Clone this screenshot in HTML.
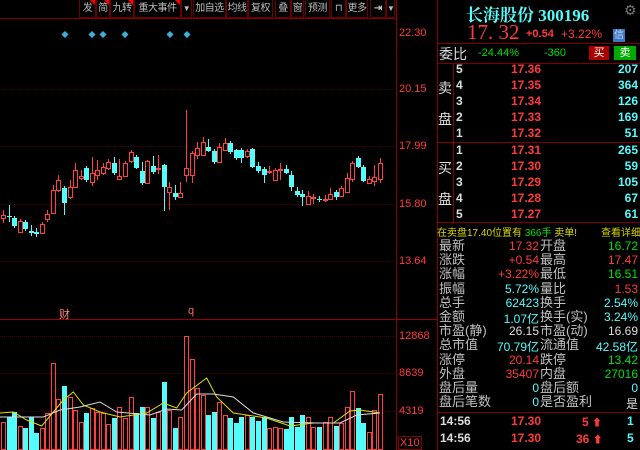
<!DOCTYPE html>
<html><head><meta charset="utf-8">
<style>
*{margin:0;padding:0;box-sizing:border-box}
body{width:640px;height:450px;background:#000;overflow:hidden;position:relative;font-family:"Liberation Sans","Noto Sans CJK SC",sans-serif}
.a{position:absolute;white-space:nowrap}
.tb{position:absolute;top:0;height:18px;border:1px solid #6a0000;border-top:none;color:#bbb;font-size:10px;line-height:17px;text-align:center;white-space:nowrap;overflow:hidden;letter-spacing:-0.5px}
.tri{position:absolute;right:0;top:0;width:0;height:0;border-top:5px solid #f00;border-left:5px solid transparent}
.r{color:#ff3b3b}.c{color:#54fcfc}.g{color:#00e000}.w{color:#ddd}.y{color:#d8d800}.gr{color:#c0c0c0}
.hl{position:absolute;height:1px;background:#800000}
.vl{position:absolute;width:1px;background:#800000}
.ob{font-size:12px;font-weight:bold}
.st{font-size:13px}
</style></head><body>
<svg id="ch" width="640" height="450" style="position:absolute;left:0;top:0"></svg>

<div class="tb" style="left:79px;width:17px">发<i class="tri"></i></div>
<div class="tb" style="left:96px;width:14px">简<i class="tri"></i></div>
<div class="tb" style="left:110px;width:24px">九转<i class="tri"></i></div>
<div class="tb" style="left:134px;width:47px">重大事件<i class="tri"></i></div>
<div class="tb" style="left:181px;width:11px;font-size:8px">▼</div>
<div class="tb" style="left:193px;width:33px">加自选</div>
<div class="tb" style="left:226px;width:22px">均线</div>
<div class="tb" style="left:248px;width:25px">复权</div>
<div class="tb" style="left:275px;width:16px">叠</div>
<div class="tb" style="left:291px;width:13px">窗</div>
<div class="tb" style="left:305px;width:25px">预测</div>
<div class="tb" style="left:331px;width:15px">⊓</div>
<div class="tb" style="left:346px;width:22px">更多</div>
<div class="tb" style="left:370px;width:16px;font-weight:bold">⇥</div>
<div class="tb" style="left:386px;width:9px;font-size:8px">▼</div>

<div class="a r" style="left:399px;top:27px;font-size:11px">22.30</div>
<div class="a r" style="left:399px;top:83px;font-size:11px">20.15</div>
<div class="a r" style="left:399px;top:140px;font-size:11px">17.99</div>
<div class="a r" style="left:399px;top:198px;font-size:11px">15.80</div>
<div class="a r" style="left:399px;top:255px;font-size:11px">13.64</div>
<div class="a r" style="left:399px;top:330px;font-size:11px">12868</div>
<div class="a r" style="left:399px;top:367px;font-size:11px">8639</div>
<div class="a r" style="left:399px;top:405px;font-size:11px">4319</div>
<div class="a r" style="left:398px;top:436px;font-size:11px;border:1px solid #800;padding:0 1px;line-height:12px">X10</div>
<div class="a" style="left:59px;top:306px;font-size:11px;color:#f88">财</div>
<div class="a" style="left:188px;top:305px;font-size:11px;color:#f66">q</div>

<div class="a c" style="left:466px;top:1px;font-size:17px;font-weight:bold;font-family:'Liberation Serif','Noto Serif CJK SC',serif">长海股份 300196</div>
<div class="a" style="left:624px;top:2px;font-size:14px;color:#777">⚙</div>
<div class="a r" style="left:467px;top:20px;font-size:21px;font-family:'Liberation Serif',serif">17. 32</div>
<div class="a r" style="left:526px;top:28px;font-size:11px;font-weight:bold">+0.54</div>
<div class="a r" style="left:561px;top:27px;font-size:12px">+3.22%</div>
<div class="a" style="left:613px;top:29px;width:12px;height:13px;background:#3a78c8;color:#cde;font-size:10px;line-height:13px;text-align:center">信</div>
<div class="hl" style="left:437px;top:43px;width:203px"></div>
<div class="a w" style="left:439px;top:44px;font-size:14px">委比</div>
<div class="a g" style="left:478px;top:47px;font-size:11px">-24.44%</div>
<div class="a g" style="left:544px;top:47px;font-size:11px">-360</div>
<div class="a" style="left:589px;top:46px;width:20px;height:14px;background:#a00;color:#fff;font-size:11px;line-height:14px;text-align:center">买</div>
<div class="a" style="left:614px;top:46px;width:22px;height:14px;background:#0a0;color:#fff;font-size:11px;line-height:14px;text-align:center">卖</div>
<div class="hl" style="left:437px;top:63px;width:203px"></div>
<div class="hl" style="left:437px;top:142px;width:203px"></div>
<div class="hl" style="left:437px;top:222px;width:203px"></div>
<div class="vl" style="left:453px;top:63px;height:159px"></div>
<div class="a w" style="left:438px;top:78px;font-size:14px">卖</div>
<div class="a w" style="left:438px;top:109px;font-size:14px">盘</div>
<div class="a w" style="left:438px;top:158px;font-size:14px">买</div>
<div class="a w" style="left:438px;top:189px;font-size:14px">盘</div>
<div id="ob"></div>
<div class="a y" style="left:437px;top:224px;font-size:10px">在卖盘17.40位置有 <span class="g">366手</span> 卖单!</div>
<div class="a y" style="left:601px;top:224px;font-size:10px">查看详细</div>
<div id="stats"></div>
<div class="hl" style="left:437px;top:412px;width:203px"></div>
<div class="a w ob" style="left:440px;top:414px">14:56</div>
<div class="a r ob" style="left:511px;top:414px">17.30</div>
<div class="a r ob" style="left:582px;top:414px">5 <span style="font-size:10px">⬆</span></div>
<div class="a c ob" style="left:627px;top:414px">1</div>
<div class="a w ob" style="left:440px;top:431px">14:56</div>
<div class="a r ob" style="left:511px;top:431px">17.30</div>
<div class="a r ob" style="left:576px;top:431px">36 <span style="font-size:10px">⬆</span></div>
<div class="a c ob" style="left:627px;top:431px">5</div>

<script>
var S='';
function L(x1,y1,x2,y2,c,d){S+='<line x1="'+x1+'" y1="'+y1+'" x2="'+x2+'" y2="'+y2+'" stroke="'+c+'" stroke-width="1"'+(d?' stroke-dasharray="'+d+'"':'')+'/>';}
L(0,18.5,396,18.5,'#800000');
L(396.5,0,396.5,450,'#8a0000');L(437.5,0,437.5,450,'#8a0000');
L(0,319.5,437,319.5,'#9a0000');
[89.5,146.5,204.5,261.5].forEach(function(y){L(0,y,396,y,'#4a0000','1 1');});
[336.5,373.5,411.5].forEach(function(y){L(0,y,396,y,'#4a0000','1 1');});
[65,92,103,125,170,187].forEach(function(x){S+='<rect x="'+(x-2.5)+'" y="32" width="5" height="5" fill="#3bb0d8" transform="rotate(45 '+x+' 34.5)"/>';});
var K=[[215,218,210,223,'r'],[216,217,205,222,'c'],[218,226,216,228,'c'],[221,232,219,233,'r'],[222,229,220,231,'c'],[231,233,225,236,'c'],[232,234,228,237,'c'],[224,233,222,234,'r'],[214,219,210,222,'r'],[190,213,185,214,'r'],[180,190,175,192,'r'],[188,203,186,215,'c'],[187,197,180,199,'r'],[170,187,163,188,'r'],[176,178,170,180,'r'],[168,180,166,182,'c'],[173,182,157,186,'r'],[170,175,160,180,'r'],[167,173,163,175,'r'],[162,168,159,170,'r'],[163,173,157,175,'c'],[176,179,159,179,'r'],[163,176,161,177,'r'],[152,161,150,163,'r'],[157,168,155,169,'c'],[171,183,162,185,'c'],[161,183,160,184,'r'],[166,172,156,174,'c'],[168,169,155,174,'r'],[165,187,164,211,'c'],[187,192,182,210,'r'],[193,197,185,200,'c'],[193,197,182,198,'r'],[168,175,110,182,'r'],[153,175,151,183,'r'],[148,155,142,159,'r'],[142,155,137,156,'r'],[147,151,139,152,'c'],[151,162,149,164,'c'],[147,162,143,163,'r'],[143,150,138,151,'r'],[143,152,141,154,'c'],[150,158,149,160,'c'],[150,158,148,163,'c'],[151,156,149,158,'r'],[149,167,148,168,'c'],[166,171,162,173,'c'],[169,175,167,183,'c'],[171,172,166,174,'r'],[170,180,168,181,'r'],[169,170,163,180,'r'],[169,173,165,174,'c'],[175,187,171,191,'c'],[191,195,187,197,'c'],[194,197,190,206,'c'],[196,204,191,205,'r'],[197,198,194,204,'r'],[199,200,196,202,'c'],[199,200,195,202,'r'],[194,199,188,200,'r'],[192,197,190,200,'c'],[188,196,186,197,'r'],[178,192,173,193,'r'],[163,179,161,182,'r'],[158,167,156,168,'c'],[167,181,165,182,'c'],[179,183,176,184,'r'],[177,181,165,186,'r'],[163,179,158,183,'r']];
var V=[422,417,412,426,428,417,433,428,413,363,399,386,397,410,422,413,408,412,413,424,418,407,418,397,413,407,407,418,412,382,410,428,417,336,359,388,395,415,412,402,415,418,423,417,415,417,421,417,428,427,428,429,417,427,415,417,427,427,422,417,426,423,407,391,408,423,432,410,394];
var R='#ff4040',C='#54fcfc',n=K.length,st=(380-3)/(n-1);
for(var i=0;i<n;i++){var k=K[i],x=Math.round(3+i*st)+0.5,col=k[4]=='r'?R:C;
 L(x,k[2],x,k[3],col);
 var h=Math.max(1,k[1]-k[0]);
 if(k[4]=='r')S+='<rect x="'+(x-2)+'" y="'+(k[0]+0.5)+'" width="4" height="'+h+'" fill="#000" stroke="'+R+'"/>';
 else S+='<rect x="'+(x-2.5)+'" y="'+k[0]+'" width="5" height="'+h+'" fill="'+C+'"/>';
 if(i<V.length){var v=V[i];
 if(k[4]=='r')S+='<rect x="'+(x-2)+'" y="'+(v+0.5)+'" width="4" height="'+(449-v)+'" fill="none" stroke="'+R+'"/>';
 else S+='<rect x="'+(x-2.5)+'" y="'+v+'" width="5" height="'+(450-v)+'" fill="'+C+'"/>';}
}
function P(a,c){var s='';for(var i=0;i<a.length;i+=2)s+=(a[i]/3)+','+a[i+1]+' ';S+='<polyline points="'+s+'" fill="none" stroke="'+c+'" stroke-width="1"/>';}
P([0,413,40,412,80,420,125,426,160,412,190,400,220,392,250,405,300,412,360,417,440,413,490,403,530,408,560,393,620,378,650,397,700,413,800,418,870,426,940,423,1000,423,1050,411,1080,410,1140,413],'#e0e000');
P([0,417,130,417,180,410,240,407,300,402,350,412,450,415,500,409,545,410,590,394,640,394,700,397,760,413,850,422,950,423,1020,423,1070,415,1140,413],'#dddddd');
document.getElementById('ch').innerHTML=S;
var ob=[['5','17.36','207'],['4','17.35','364'],['3','17.34','126'],['2','17.33','169'],['1','17.32','51'],['1','17.31','265'],['2','17.30','59'],['3','17.29','105'],['4','17.28','67'],['5','17.27','61']];
var h='';ob.forEach(function(o,i){var y=62+i*16+(i>=5?1:0);
h+='<div class="a w ob" style="left:456px;top:'+y+'px">'+o[0]+'</div><div class="a r ob" style="left:511px;top:'+y+'px">'+o[1]+'</div><div class="a c ob" style="right:2px;top:'+y+'px">'+o[2]+'</div>';});
document.getElementById('ob').innerHTML=h;
var sd=[['最新','17.32','r','开盘','16.72','g'],['涨跌','+0.54','r','最高','17.47','r'],['涨幅','+3.22%','r','最低','16.51','g'],['振幅','5.72%','c','量比','1.53','r'],['总手','62423','c','换手','2.54%','c'],['金额','1.07亿','c','换手(实)','3.24%','c'],['市盈(静)','26.15','w','市盈(动)','16.69','w'],['总市值','70.79亿','c','流通值','42.58亿','c'],['涨停','20.14','r','跌停','13.42','g'],['外盘','35407','r','内盘','27016','g'],['盘后量','0','c','盘后额','0','c'],['盘后笔数','0','c','是否盈利','是','w']];
h='';sd.forEach(function(o,i){var y=238+i*14.2;
h+='<div class="a gr st" style="left:439px;top:'+y+'px;line-height:15px">'+o[0]+'</div><div class="a '+o[2]+'" style="right:101px;top:'+(y+1)+'px;font-size:12px">'+o[1]+'</div><div class="a gr st" style="left:540px;top:'+y+'px;line-height:15px">'+o[3]+'</div><div class="a '+o[5]+'" style="right:2px;top:'+(y+1)+'px;font-size:12px">'+o[4]+'</div>';});
document.getElementById('stats').innerHTML=h;
</script>
</body></html>
